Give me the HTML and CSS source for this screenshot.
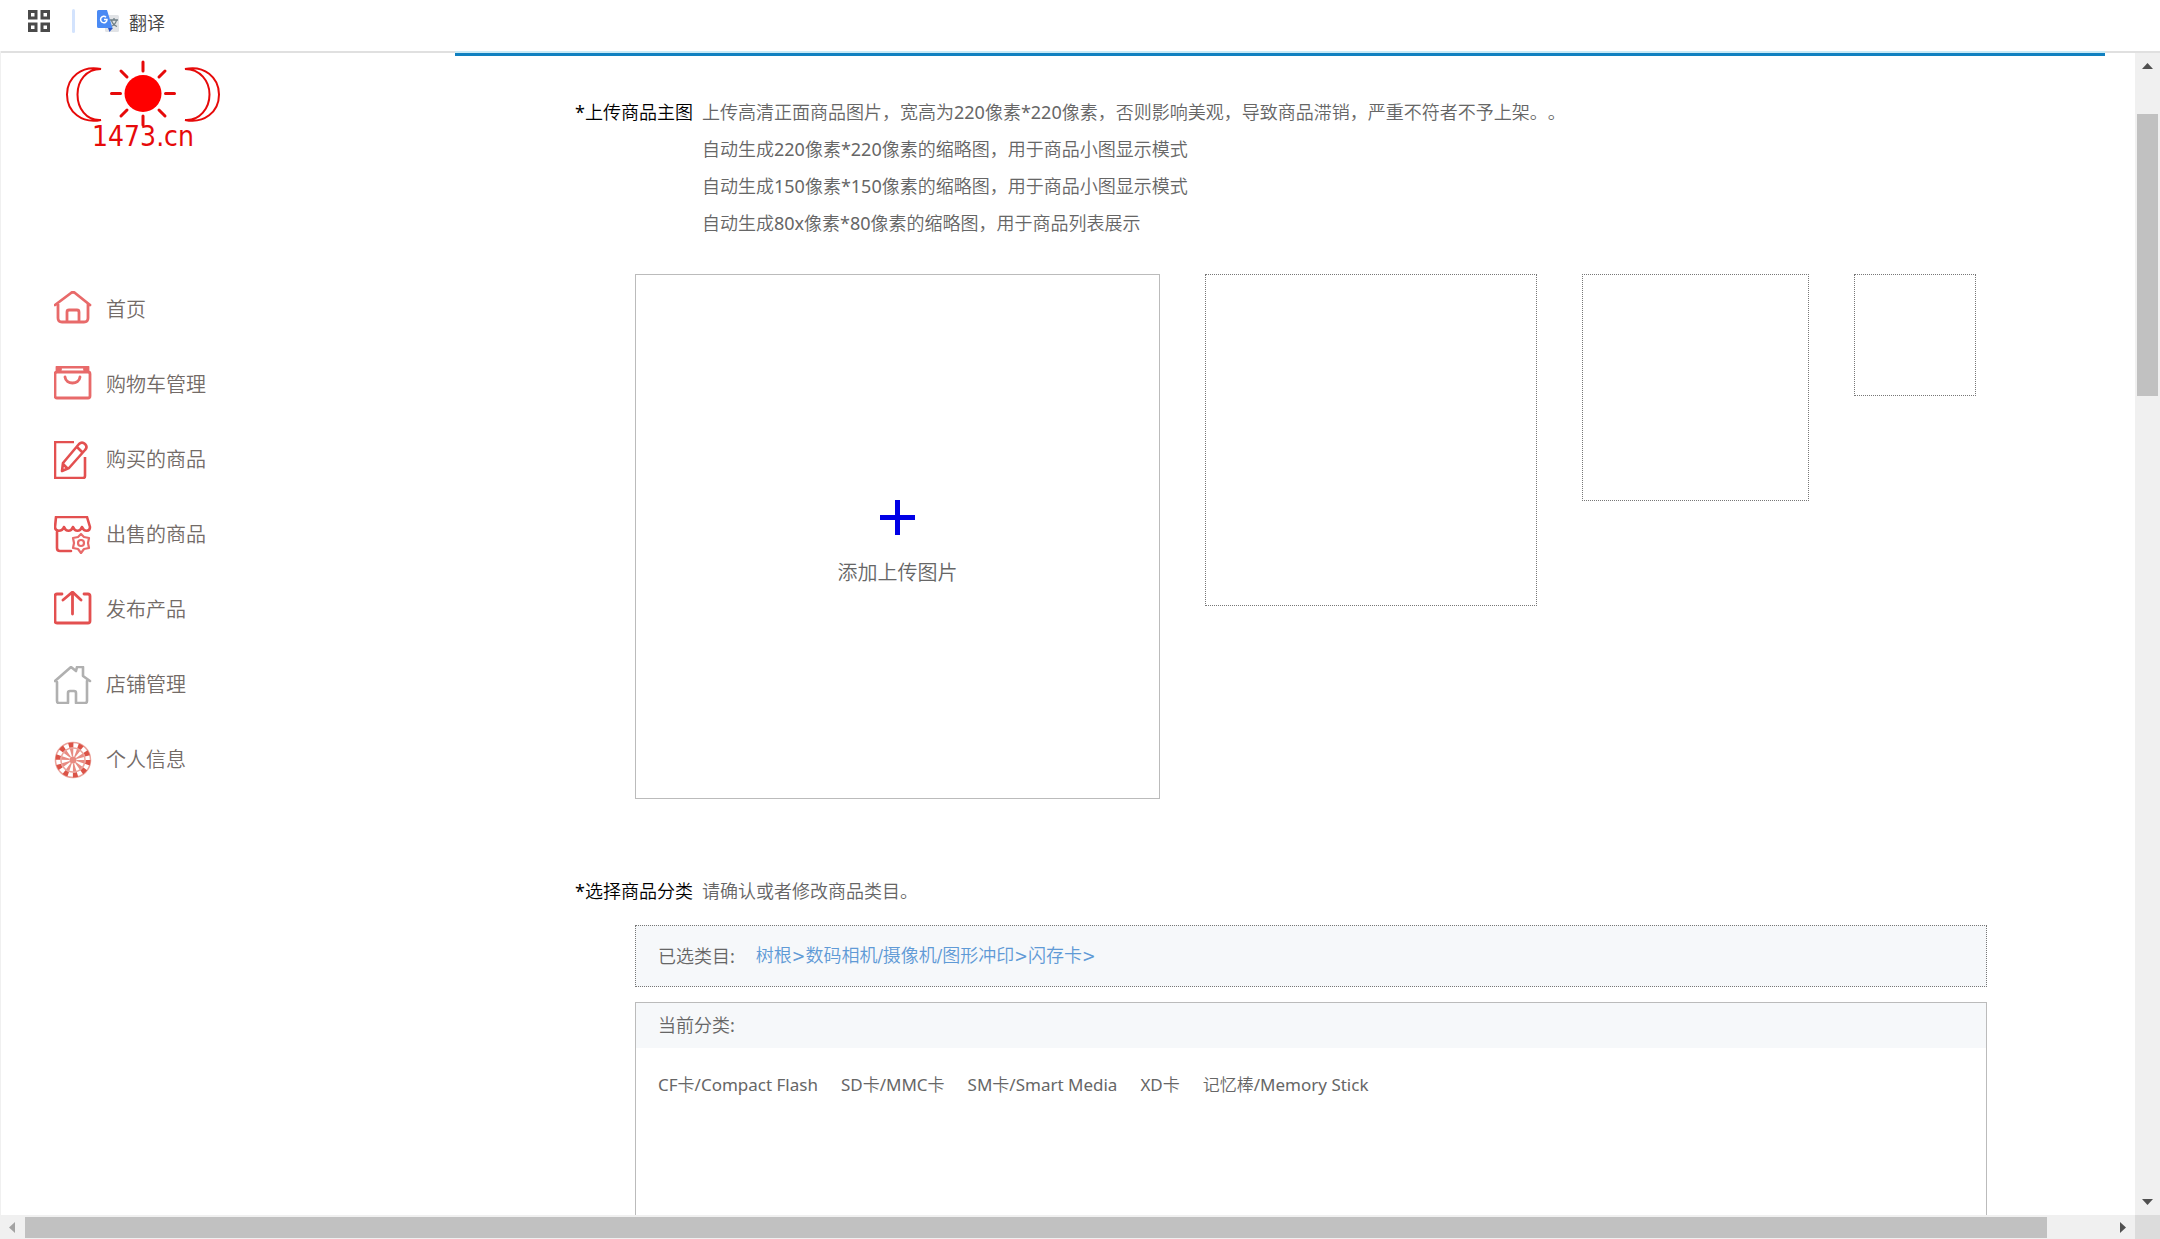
FILE: index.html
```html
<!DOCTYPE html>
<html lang="zh-CN">
<head>
<meta charset="utf-8">
<title>发布产品 - 1473.cn</title>
<link rel="stylesheet" href="styles.css">
</head>
<body>
<div class="shell">
  <header class="bookmarks">
    <button class="apps" type="button" aria-label="应用">
      <svg width="22" height="22" viewBox="0 0 22 22" fill="none" stroke="#4a4a4a" stroke-width="3"><path d="M1.500 1.500h6.500v6.500h-6.500zM14 1.500h6.500v6.500h-6.500zM1.500 14h6.500v6.500h-6.500zM14 14h6.500v6.500h-6.500z"/></svg>
    </button>
    <span class="divider"></span>
    <a class="bookmark" href="#">
      <svg width="22" height="22" viewBox="0 0 22 22"><rect x="8" y="5" width="14" height="17" rx="1.500" fill="#e1e3e6"/><path d="M13 10h8M17 8v2M19.500 10c-.5 3-3 5.500-5.500 6.500M14.500 10.500c1 3 3 5 5.500 6" stroke="#6f7f86" stroke-width="1.300" fill="none"/><path d="M11 18h5l-3.500 4z" fill="#2f56c4"/><path d="M1.500 0h8.500l5.500 18H1.500A1.500 1.500 0 0 1 0 16.500v-15A1.500 1.500 0 0 1 1.500 0z" fill="#4a8af4"/><path d="M9 7.200A3.200 3.200 0 1 0 10 9.500H7" stroke="#fff" stroke-width="1.500" fill="none"/></svg>
      <span>翻译</span>
    </a>
  </header>

  <div class="viewport">
    <aside class="sidebar">
      <a class="logo" href="#" aria-label="1473.cn">
        <svg width="155" height="96" viewBox="0 0 155 96">
          <g fill="none" stroke="#e60a0a" stroke-width="2">
            <path d="M35 9C16 5 1 17 1 34.500S16 64 35 60C20 61 11.500 48 11.500 34.500S20 9 35 9z"/>
            <path d="M119 9c19-4 34 8 34 25.500S138 64 119 60c15 1 24.500-12 24.500-25.500S134 9 119 9z"/>
            <path stroke-width="3" stroke-linecap="round" d="M77 2v9M77 56v9M45.500 33.500h9M99.500 33.500h9M55 11l6 6M93 17l6-6M55 56l6-6M93 50l6 6"/>
          </g>
          <circle cx="77" cy="33.500" r="18.500" fill="#f00"/>
          <text class="logo-text" x="77" y="86" text-anchor="middle">1473.cn</text>
        </svg>
      </a>
      <nav class="menu">
        <a href="#"><svg width="38" height="38" viewBox="0 0 38 38" fill="none" stroke="#e86a6a" stroke-width="2.800" stroke-linecap="round" stroke-linejoin="round"><path d="M1 14L17 2q2-1.500 4 0L36 14M4 13v14q0 4 4 4h22q4 0 4-4V13M13 31V21q0-2 2-2h8q2 0 2 2v10"/></svg><span>首页</span></a>
        <a href="#"><svg width="38" height="38" viewBox="0 0 38 38" fill="none" stroke="#e86a6a" stroke-width="2.800" stroke-linecap="round" stroke-linejoin="round"><path d="M3 6h31q2 0 2 2v22q0 2-2 2H3q-2 0-2-2V8q0-2 2-2zM3 5V1h31v4M11 11c1 8 14 8 15 0"/><circle cx="5" cy="3" r="1.500"/><circle cx="32" cy="3" r="1.500"/></svg><span>购物车管理</span></a>
        <a href="#"><svg width="38" height="38" viewBox="0 0 38 38" fill="none" stroke="#e35050" stroke-width="2.600" stroke-linejoin="round"><path d="M20 1H1v36h28q2 0 2-2V16M8 30l1-8L25 3q3-3 6 0t0 6L15 27zM9 23l5 5M23 6l5 5"/></svg><span>购买的商品</span></a>
        <a href="#"><svg width="38" height="38" viewBox="0 0 38 38" fill="none" stroke="#e35050" stroke-width="2.600" stroke-linejoin="round" stroke-linecap="round"><path d="M3 1h30l3 10c0 5-6 5-8 0-2 5-7 5-9 0-2 5-7 5-9 0-2 5-9 5-9 0L2 1M3 16v16q0 3 3 3h11"/><path stroke="#e86a6a" stroke-width="2.200" d="M27 18l3 3 5 1-1 5 1 5-5 1-3 4-3-4-5-1 1-5-1-5 5-1z"/><circle cx="27" cy="27" r="3" stroke="#e86a6a" stroke-width="2.200"/></svg><span>出售的商品</span></a>
        <a href="#"><svg width="38" height="38" viewBox="0 0 38 38" fill="none" stroke="#e35050" stroke-width="2.800" stroke-linecap="round" stroke-linejoin="round"><path d="M8 3H3Q1 3 1 5v25q0 2 2 2h31q2 0 2-2V5q0-2-2-2h-4M18.500 23V1M9 9l9.500-8L27 9"/></svg><span>发布产品</span></a>
        <a href="#"><svg width="38" height="38" viewBox="0 0 38 38" fill="none" stroke="#b0b0b0" stroke-width="2.600" stroke-linecap="round" stroke-linejoin="round"><path d="M1 15L17 1l5 4 1-4h6v9l7 5M3 16v19q0 2 2 2h9V27q0-2 2-2h4q2 0 2 2v10h9q2 0 2-2V15"/></svg><span>店铺管理</span></a>
        <a href="#"><svg width="38" height="38" viewBox="0 0 38 38" fill="none"><circle cx="19" cy="19" r="17.500" fill="#fff" stroke="#eba39b" stroke-width="1.500"/><circle cx="19" cy="19" r="15" stroke="#db5347" stroke-width="5" stroke-dasharray="4.700 4.720"/><circle cx="19" cy="19" r="8" stroke="#e88b82" stroke-width="9" stroke-dasharray="2.500 2.530"/><circle cx="19" cy="19" r="12" stroke="#eba39b" stroke-width="1.500"/><circle cx="19" cy="19" r="3.500" fill="#e88b82"/></svg><span>个人信息</span></a>
      </nav>
    </aside>

    <main class="main">
      <section class="field">
        <h2 class="label">*上传商品主图</h2>
        <div class="hints">
          <p>上传高清正面商品图片，宽高为220像素*220像素，否则影响美观，导致商品滞销，严重不符者不予上架。。</p>
          <p>自动生成220像素*220像素的缩略图，用于商品小图显示模式</p>
          <p>自动生成150像素*150像素的缩略图，用于商品小图显示模式</p>
          <p>自动生成80x像素*80像素的缩略图，用于商品列表展示</p>
        </div>
      </section>
      <div class="previews">
        <button class="upload" type="button">
          <svg width="35" height="35" viewBox="0 0 35 35" stroke="#0000e6" stroke-width="5"><path d="M17.500 0v35M0 17.500h35"/></svg>
          <span>添加上传图片</span>
        </button>
        <div class="thumb large"></div>
        <div class="thumb medium"></div>
        <div class="thumb small"></div>
      </div>

      <section class="field">
        <h2 class="label">*选择商品分类</h2>
        <div class="hints"><p>请确认或者修改商品类目。</p></div>
      </section>
      <div class="selected">
        <span>已选类目:</span>
        <a href="#">树根&gt;数码相机/摄像机/图形冲印&gt;闪存卡&gt;</a>
      </div>
      <section class="categories">
        <h3>当前分类:</h3>
        <div class="options">
          <a href="#">CF卡/Compact Flash</a>
          <a href="#">SD卡/MMC卡</a>
          <a href="#">SM卡/Smart Media</a>
          <a href="#">XD卡</a>
          <a href="#">记忆棒/Memory Stick</a>
        </div>
      </section>
    </main>
  </div>

  <div class="bar vertical">
    <svg width="11" height="6" viewBox="0 0 11 6"><path d="M0 6L5.500 0 11 6z" fill="#505050"/></svg>
    <div class="track"><div class="grip"></div></div>
    <svg width="11" height="6" viewBox="0 0 11 6"><path d="M0 0h11L5.500 6z" fill="#505050"/></svg>
  </div>
  <div class="bar horizontal">
    <svg width="6" height="11" viewBox="0 0 6 11"><path d="M6 0v11L0 5.500z" fill="#a3a3a3"/></svg>
    <div class="track"><div class="grip"></div></div>
    <svg width="6" height="11" viewBox="0 0 6 11"><path d="M0 0l6 5.500L0 11z" fill="#505050"/></svg>
  </div>
  <div class="corner"></div>
</div>
</body>
</html>
```

FILE: styles.css
```css
* {
  box-sizing: border-box;
}

body,
h2,
h3,
p {
  margin: 0;
  font-weight: 400;
}

body {
  font: 18px/24px "Noto Sans", "Noto Sans CJK SC DemiLight", "Noto Sans CJK SC", sans-serif;
  text-spacing-trim: space-all;
  color: #666;
  background: #fff;
}

a {
  color: inherit;
  text-decoration: none;
}

button {
  padding: 0;
  border: 0;
  background: none;
  font: inherit;
  color: inherit;
}

svg {
  display: block;
  flex: none;
}

.shell {
  display: grid;
  grid-template: 51px minmax(0, 1fr) 24px / minmax(0, 1fr) 25px;
  height: 100vh;
  overflow: hidden;
}

/* Bookmark bar */
.bookmarks {
  grid-column: 1 / -1;
  display: flex;
  align-items: center;
  padding: 0 28px 9px;
  color: #444;
}

.divider {
  width: 3px;
  height: 24px;
  margin: 0 22px;
  border-radius: 2px;
  background: #d3e3fd;
}

.bookmark {
  display: flex;
  align-items: center;
  gap: 10px;
}

.bookmark span {
  padding-top: 3px;
}

.viewport {
  display: flex;
  overflow: hidden;
  border-left: 1px solid #f0f0f0;
  background: linear-gradient(#e0e0e0 2px, #fff 2px);
}

/* Sidebar */
.sidebar {
  flex: none;
  width: 454px;
  padding-top: 9px;
}

.logo {
  display: block;
  width: 155px;
  margin-left: 65px;
}

.logo-text {
  font-family: "DejaVu Sans Condensed", "Noto Sans", sans-serif;
  font-size: 28px;
  fill: #e60a0a;
}

.menu {
  display: grid;
  gap: 37px;
  margin-top: 135px;
  padding-left: 53px;
  font-size: 20px;
  line-height: 38px;
  color: #736b67;
}

.menu a {
  display: flex;
  gap: 14px;
}

/* Product form */
.main {
  flex: 1;
  min-width: 0;
  margin-right: 30px;
}

.main::before {
  content: "";
  display: block;
  height: 5px;
  margin-bottom: 38px;
  background: linear-gradient(#c8e9f5 2px, #1080c0 2px);
}

.field {
  display: flex;
  gap: 10px;
  padding-left: 120px;
  line-height: 37px;
}

.label {
  width: 117px;
  font-size: 18px;
  color: #000;
  white-space: nowrap;
}

.previews {
  display: flex;
  align-items: flex-start;
  gap: 45px;
  margin: 32px 0 74px 180px;
}

.upload {
  display: flex;
  flex-direction: column;
  align-items: center;
  gap: 26px;
  width: 525px;
  height: 525px;
  padding-top: 225px;
  border: 1px solid #bbb;
  font-size: 20px;
}

.thumb {
  border: 1px dotted #777;
}

.large {
  width: 332px;
  height: 332px;
}

.medium {
  width: 227px;
  height: 227px;
}

.small {
  width: 122px;
  height: 122px;
}

.selected {
  display: flex;
  gap: 21px;
  margin: 15px 118px 15px 180px;
  padding: 18px 22px;
  border: 1px dotted #777;
  background: #f6f8fa;
}

.selected a {
  font-family: "DejaVu Sans Condensed", "Noto Sans CJK SC DemiLight", "Noto Sans CJK SC", sans-serif;
  color: #5f9ad6;
}

.categories {
  height: 400px;
  margin: 0 118px 0 180px;
  border: 1px solid #bbb;
}

.categories h3 {
  padding: 10px 22px 11px;
  font-size: 18px;
  background: #f6f8fa;
}

.options {
  display: flex;
  flex-wrap: wrap;
  gap: 23px;
  padding: 25px 22px;
  font-size: 17px;
}

/* Scroll bars */
.bar {
  display: flex;
  align-items: center;
  background: #f0f0f0;
}

.track {
  flex: 1;
}

.grip {
  background: #c1c1c1;
}

.vertical {
  flex-direction: column;
  padding: 10px 0;
  border-top: 2px solid #e0e0e0;
}

.vertical .track {
  width: 21px;
  padding-top: 45px;
}

.vertical .grip {
  height: 26%;
}

.horizontal {
  padding: 0 9px;
}

.horizontal .track {
  margin: 0 10px;
}

.horizontal .grip {
  width: 97%;
  height: 21px;
}

.corner {
  background: #dcdcdc;
}
```
